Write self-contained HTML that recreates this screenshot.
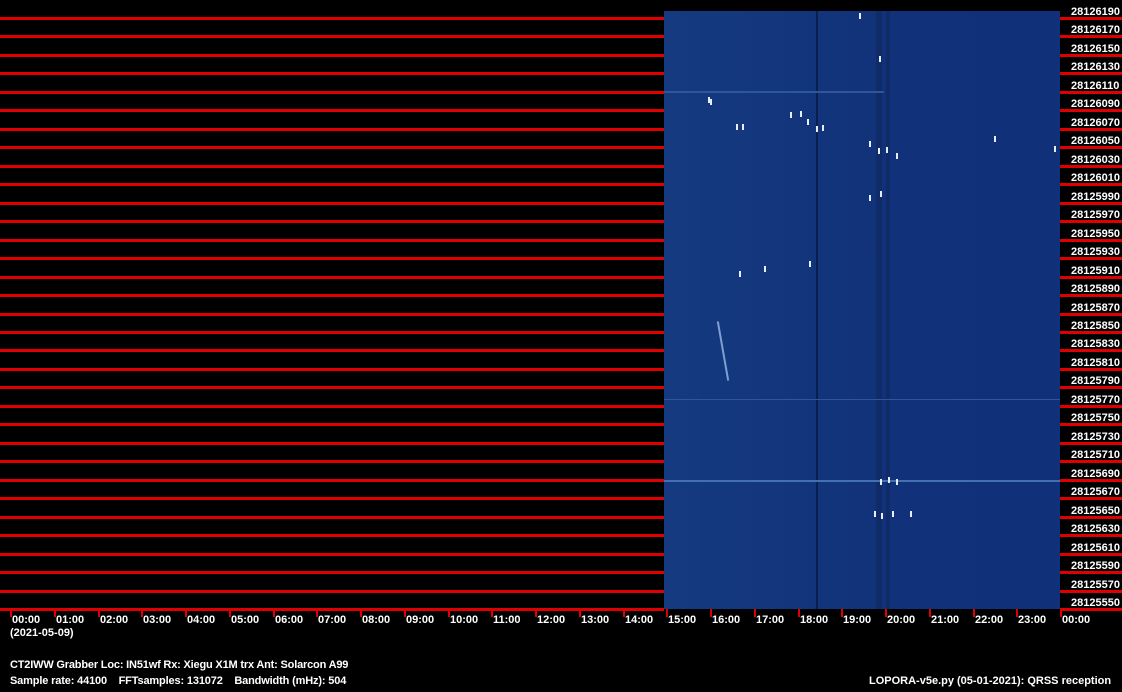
<!DOCTYPE html>
<html><head><meta charset="utf-8"><style>
body{margin:0;width:1122px;height:692px;background:#000;position:relative;overflow:hidden;font-family:"Liberation Sans",sans-serif;font-weight:bold;font-size:11px;color:#fff}
div{position:absolute}
.r{background:#e00000;height:3px}
.wf{left:664px;top:11px;width:396px;height:598px;background:#12337a;overflow:hidden}
.lab{left:1071px;line-height:12px}
.t{top:614px;line-height:12px}
.tk{top:609px;width:2px;height:8px;background:#e00000}
.d{background:#e8eeff}
</style></head><body>
<div class="wf" id="wf">
<div style="left:0;top:0;width:396px;height:598px;background:linear-gradient(90deg,#153a80,#12347a 40%,#11327a 60%,#10307a)"></div>
<div style="left:152px;top:0;width:2px;height:598px;background:#0a1f50"></div>
<div style="left:212px;top:0;width:6px;height:598px;background:#102c68"></div>
<div style="left:222px;top:0;width:4px;height:598px;background:#102c68"></div>
<div style="left:0;top:469px;width:396px;height:2px;background:#4470b0"></div>
<div style="left:0;top:388px;width:396px;height:1px;background:#2f559a"></div>
<div style="left:0;top:80px;width:220px;height:2px;background:#2f559a"></div>
<div style="left:58px;top:310px;width:2px;height:60px;background:#7f9fd0;transform:rotate(-10deg)"></div>
</div>
<div id="c"></div>
<div style="left:10px;top:627px;line-height:12px">(2021-05-09)</div>
<div style="left:10px;top:659px;line-height:12px;letter-spacing:-0.18px">CT2IWW Grabber Loc: IN51wf Rx: Xiegu X1M trx Ant: Solarcon A99</div>
<div style="left:10px;top:675px;line-height:12px;letter-spacing:-0.15px;white-space:pre">Sample rate: 44100    FFTsamples: 131072    Bandwidth (mHz): 504</div>
<div style="left:869px;top:675px;line-height:12px">LOPORA-v5e.py (05-01-2021): QRSS reception</div>
<script>
var c=document.getElementById('c'),h='';
for(var k=0;k<33;k++){var y=Math.round(17+18.47*k);
h+='<div class="r" style="left:0;width:664px;top:'+y+'px"></div><div class="r" style="left:1060px;width:62px;top:'+y+'px"></div>';
h+='<div class="lab" style="top:'+(y-11)+'px">'+(28126190-20*k)+'</div>';}
for(var i=0;i<25;i++){var x=Math.round(10+43.75*i);var s=(i%24<10?'0':'')+(i%24)+':00';
h+='<div class="tk" style="left:'+x+'px"></div><div class="t" style="left:'+(x+2)+'px">'+s+'</div>';}
c.innerHTML=h;
var w=document.getElementById('wf'),g='',pts=[[44,86],[46,88],[72,113],[78,113],[126,101],[136,100],[143,108],[152,115],[158,114],[205,130],[214,137],[222,136],[232,142],[205,184],[216,180],[216,468],[224,466],[232,468],[210,500],[217,502],[228,500],[246,500],[75,260],[100,255],[145,250],[195,2],[215,45],[330,125],[390,135]];
pts.forEach(function(p){g+='<div class="d" style="left:'+p[0]+'px;top:'+p[1]+'px;width:2px;height:6px"></div>'});
w.insertAdjacentHTML('beforeend',g);
</script>
</body></html>
